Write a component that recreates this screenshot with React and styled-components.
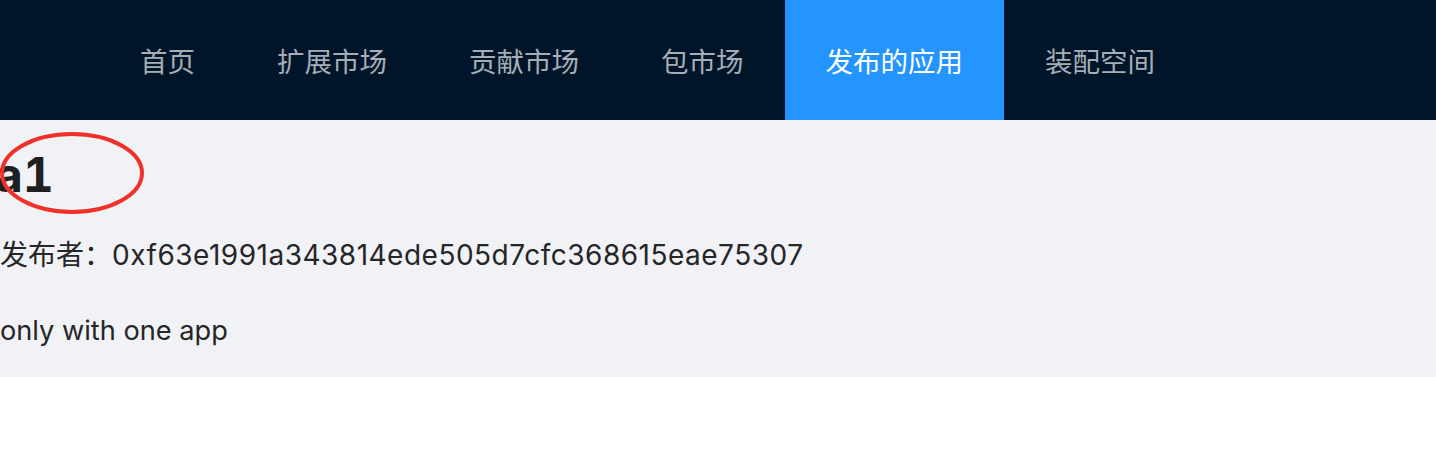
import React from 'react';
import styled, { createGlobalStyle } from 'styled-components';

const GlobalStyle = createGlobalStyle`
  html, body {
    margin: 0;
    padding: 0;
    background: #ffffff;
  }
  body {
    font-family: Inter, "Noto Sans CJK SC", "Liberation Sans", sans-serif;
  }
`;

const Header = styled.header`
  height: 120px;
  background: #001529;
  display: flex;
  padding-left: 99px;
`;

const MenuItem = styled.div`
  height: 120px;
  line-height: 120px;
  padding: 0 41px;
  font-size: 27.5px;
  font-family: "Noto Sans CJK SC", sans-serif;
  color: ${(p) => (p.active ? '#ffffff' : '#a6adb4')};
  background: ${(p) => (p.active ? '#2494fe' : 'transparent')};
  white-space: nowrap;
`;

const Content = styled.main`
  position: relative;
  background: #f0f2f5;
  padding: 26px 0 24px;
  color: #252627;
`;

const Title = styled.h1`
  margin: 0 0 29px -5px;
  font-size: 48px;
  line-height: 58px;
  font-weight: 700;
  font-variant-numeric: tabular-nums;
  color: #1f2021;
`;

const Para = styled.p`
  margin: 0 0 ${(p) => (p.last ? 0 : 32)}px;
  font-size: ${(p) => (p.last ? 27.2 : 28)}px;
  line-height: 44px;
`;

const Address = styled.span`
  letter-spacing: 0.5px;
`;

const Annotation = styled.svg`
  position: absolute;
  left: 0;
  top: 10px;
  pointer-events: none;
`;

const menu = ['首页', '扩展市场', '贡献市场', '包市场', '发布的应用', '装配空间'];

export default function App() {
  return (
    <>
      <GlobalStyle />
      <Header>
        {menu.map((label) => (
          <MenuItem key={label} active={label === '发布的应用'}>
            {label}
          </MenuItem>
        ))}
      </Header>
      <Content>
        <Title>a1</Title>
        <Para>
          发布者：<Address>0xf63e1991a343814ede505d7cfc368615eae75307</Address>
        </Para>
        <Para last>only with one app</Para>
        <Annotation width="150" height="90" viewBox="0 0 150 90">
          <ellipse cx="72" cy="43" rx="70" ry="39" fill="none" stroke="#f2302a" strokeWidth="4" />
        </Annotation>
      </Content>
    </>
  );
}
